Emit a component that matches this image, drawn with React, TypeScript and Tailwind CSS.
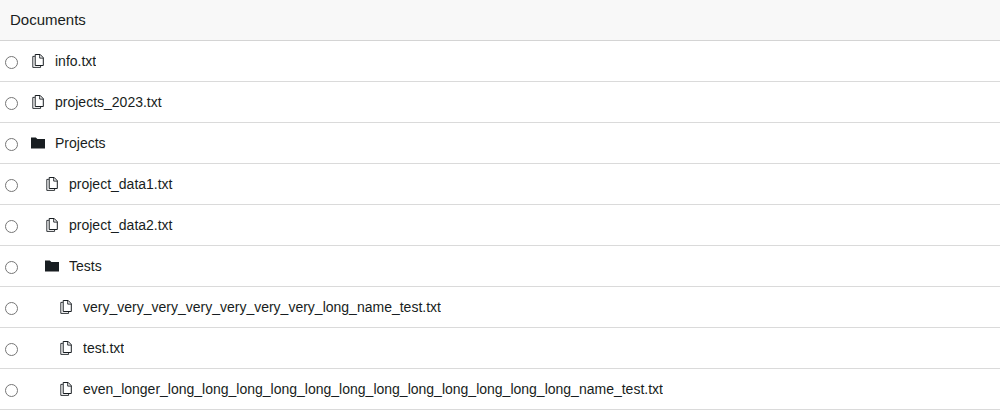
type Entry = { name: string; kind: 'file' | 'folder'; indent: string };

const entries: Entry[] = [
  { name: 'info.txt', kind: 'file', indent: 'pl-3' },
  { name: 'projects_2023.txt', kind: 'file', indent: 'pl-3' },
  { name: 'Projects', kind: 'folder', indent: 'pl-3' },
  { name: 'project_data1.txt', kind: 'file', indent: 'pl-[26px]' },
  { name: 'project_data2.txt', kind: 'file', indent: 'pl-[26px]' },
  { name: 'Tests', kind: 'folder', indent: 'pl-[26px]' },
  { name: 'very_very_very_very_very_very_very_long_name_test.txt', kind: 'file', indent: 'pl-10' },
  { name: 'test.txt', kind: 'file', indent: 'pl-10' },
  {
    name: 'even_longer_long_long_long_long_long_long_long_long_long_long_long_long_name_test.txt',
    kind: 'file',
    indent: 'pl-10',
  },
];

function FilesIcon() {
  return (
    <svg className="size-4 shrink-0" viewBox="0 0 16 16" fill="none" stroke="currentColor" aria-hidden="true">
      <path d="M5.2 1.5h5l3.1 3.2v7.8H5.200z" />
      <path d="M9.700 1.500v3.600h3.600" strokeWidth="0.9" />
      <path d="M4.800 3.400H2.800v11h7.800v-1.700" strokeWidth="0.9" />
    </svg>
  );
}

function FolderIcon() {
  return (
    <svg className="size-4 shrink-0" viewBox="0 0 16 16" fill="currentColor" aria-hidden="true">
      <path d="M1 2.400h4.800l1.600 1.700h7.600v9.300h-14z" />
    </svg>
  );
}

export default function App() {
  return (
    <main className="bg-white font-['Liberation_Sans',sans-serif] text-sm text-[#181d21]">
      <h1 className="flex h-[41px] items-center border-b border-[#d4d4d4] bg-[#f8f8f8] px-2.5 text-[15px]">Documents</h1>
      <ul>
        {entries.map((entry, index) => (
          <li key={entry.name} className="flex h-[41px] items-center border-b border-[#dadada] pl-[5px]">
            <input id={`entry-${index}`} type="radio" name="document" className="mt-[3px] size-[13px] shrink-0" />
            <label htmlFor={`entry-${index}`} className={`flex min-w-0 grow items-center gap-[9px] ${entry.indent}`}>
              {entry.kind === 'file' ? <FilesIcon /> : <FolderIcon />}
              <span className="truncate">{entry.name}</span>
            </label>
          </li>
        ))}
      </ul>
    </main>
  );
}
